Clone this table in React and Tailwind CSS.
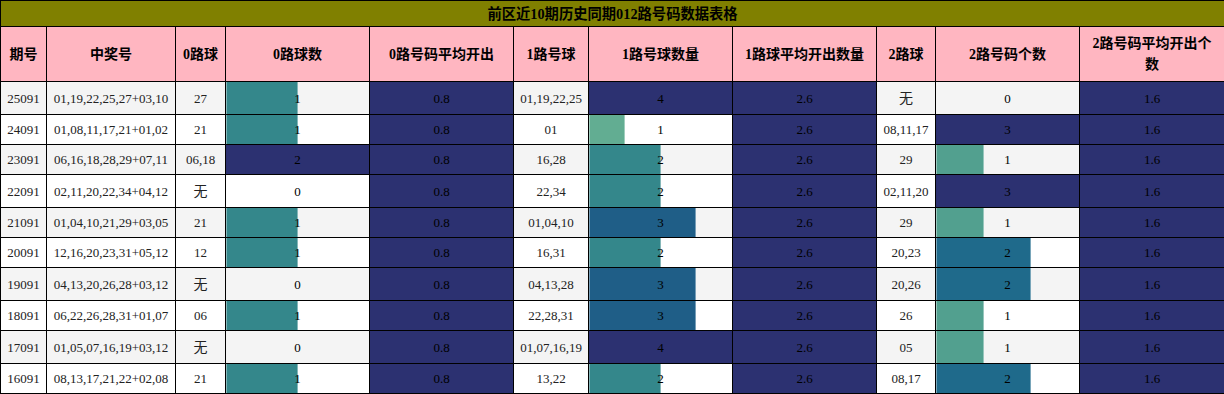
import React from "react";

const rows = [
  ["25091", "01,19,22,25,27+03,10", "27", 1, "0.8", "01,19,22,25", 4, "2.6", "无", 0, "1.6"],
  ["24091", "01,08,11,17,21+01,02", "21", 1, "0.8", "01", 1, "2.6", "08,11,17", 3, "1.6"],
  ["23091", "06,16,18,28,29+07,11", "06,18", 2, "0.8", "16,28", 2, "2.6", "29", 1, "1.6"],
  ["22091", "02,11,20,22,34+04,12", "无", 0, "0.8", "22,34", 2, "2.6", "02,11,20", 3, "1.6"],
  ["21091", "01,04,10,21,29+03,05", "21", 1, "0.8", "01,04,10", 3, "2.6", "29", 1, "1.6"],
  ["20091", "12,16,20,23,31+05,12", "12", 1, "0.8", "16,31", 2, "2.6", "20,23", 2, "1.6"],
  ["19091", "04,13,20,26,28+03,12", "无", 0, "0.8", "04,13,28", 3, "2.6", "20,26", 2, "1.6"],
  ["18091", "06,22,26,28,31+01,07", "06", 1, "0.8", "22,28,31", 3, "2.6", "26", 1, "1.6"],
  ["17091", "01,05,07,16,19+03,12", "无", 0, "0.8", "01,07,16,19", 4, "2.6", "05", 1, "1.6"],
  ["16091", "08,13,17,21,22+02,08", "21", 1, "0.8", "13,22", 2, "2.6", "08,17", 2, "1.6"],
];

const headers = [
  "期号",
  "中奖号",
  "0路球",
  "0路球数",
  "0路号码平均开出",
  "1路号球",
  "1路号球数量",
  "1路球平均开出数量",
  "2路球",
  "2路号码个数",
  "2路号码平均开出个数",
];

const colClasses = [
  "w-[46px]",
  "w-[129px]",
  "w-[50px]",
  "w-[144px]",
  "w-[144px]",
  "w-[75px]",
  "w-[144px]",
  "w-[144px]",
  "w-[59px]",
  "w-[144px]",
  "w-[145px]",
];

function barColor(f) {
  if (f >= 0.99) return "#2c3171";
  if (f >= 0.74) return "#1f5e87";
  if (f >= 0.6) return "#1f6a8b";
  if (f >= 0.45) return "#34878b";
  if (f >= 0.3) return "#52a08f";
  return "#62ad92";
}

function Text({ v }) {
  if (v === "无") {
    return <span className="font-['Noto_Sans_CJK_SC',sans-serif] text-[14px]">无</span>;
  }
  return <span>{v}</span>;
}

function BarCell({ value, max, hc }) {
  const f = value / max;
  const full = f >= 0.99;
  return (
    <td className={`relative border border-black p-0 text-center text-black ${hc}`}>
      {value > 0 && (
        <div
          className={`absolute inset-y-0 left-0 ${full ? "" : "border-x border-white/40"}`}
          style={{ width: `${f * 100}%`, backgroundColor: barColor(f) }}
        />
      )}
      <span className="relative">{value}</span>
    </td>
  );
}

function AvgCell({ v, hc }) {
  return (
    <td className={`border border-black bg-[#2c3171] p-0 text-center text-black ${hc}`}>{v}</td>
  );
}

function PlainCell({ v, hc }) {
  return (
    <td className={`border border-black p-0 text-center ${hc}`}>
      <Text v={v} />
    </td>
  );
}

export default function App() {
  return (
    <div className="w-[1224px] bg-white">
      <table className="w-[1224px] table-fixed border-collapse border border-black font-['Liberation_Serif','Noto_Sans_CJK_SC',serif] text-[13px] leading-[15px] text-[#222]">
        <colgroup>
          {colClasses.map((c, i) => (
            <col key={i} className={c} />
          ))}
        </colgroup>
        <thead>
          <tr>
            <th
              colSpan={11}
              className="h-[26px] border border-black bg-[#808000] p-0 text-center text-[14.3px] font-bold leading-[18px] text-black"
            >
              前区近10期历史同期012路号码数据表格
            </th>
          </tr>
          <tr>
            {headers.map((h, i) => (
              <th
                key={i}
                className="h-[55px] border border-black bg-[#ffb6c1] px-[6px] py-0 text-center text-[14px] font-bold leading-[21px] text-black"
              >
                {h}
              </th>
            ))}
          </tr>
        </thead>
        <tbody>
          {rows.map((r, i) => {
            const tall = r[2] === "无" || r[8] === "无";
            const hc = tall ? "h-[33px]" : "h-[30px]";
            return (
              <tr key={r[0]} className={i % 2 === 0 ? "bg-[#f4f4f4]" : "bg-white"}>
                <PlainCell v={r[0]} hc={hc} />
                <PlainCell v={r[1]} hc={hc} />
                <PlainCell v={r[2]} hc={hc} />
                <BarCell value={r[3]} max={2} hc={hc} />
                <AvgCell v={r[4]} hc={hc} />
                <PlainCell v={r[5]} hc={hc} />
                <BarCell value={r[6]} max={4} hc={hc} />
                <AvgCell v={r[7]} hc={hc} />
                <PlainCell v={r[8]} hc={hc} />
                <BarCell value={r[9]} max={3} hc={hc} />
                <AvgCell v={r[10]} hc={hc} />
              </tr>
            );
          })}
        </tbody>
      </table>
    </div>
  );
}
